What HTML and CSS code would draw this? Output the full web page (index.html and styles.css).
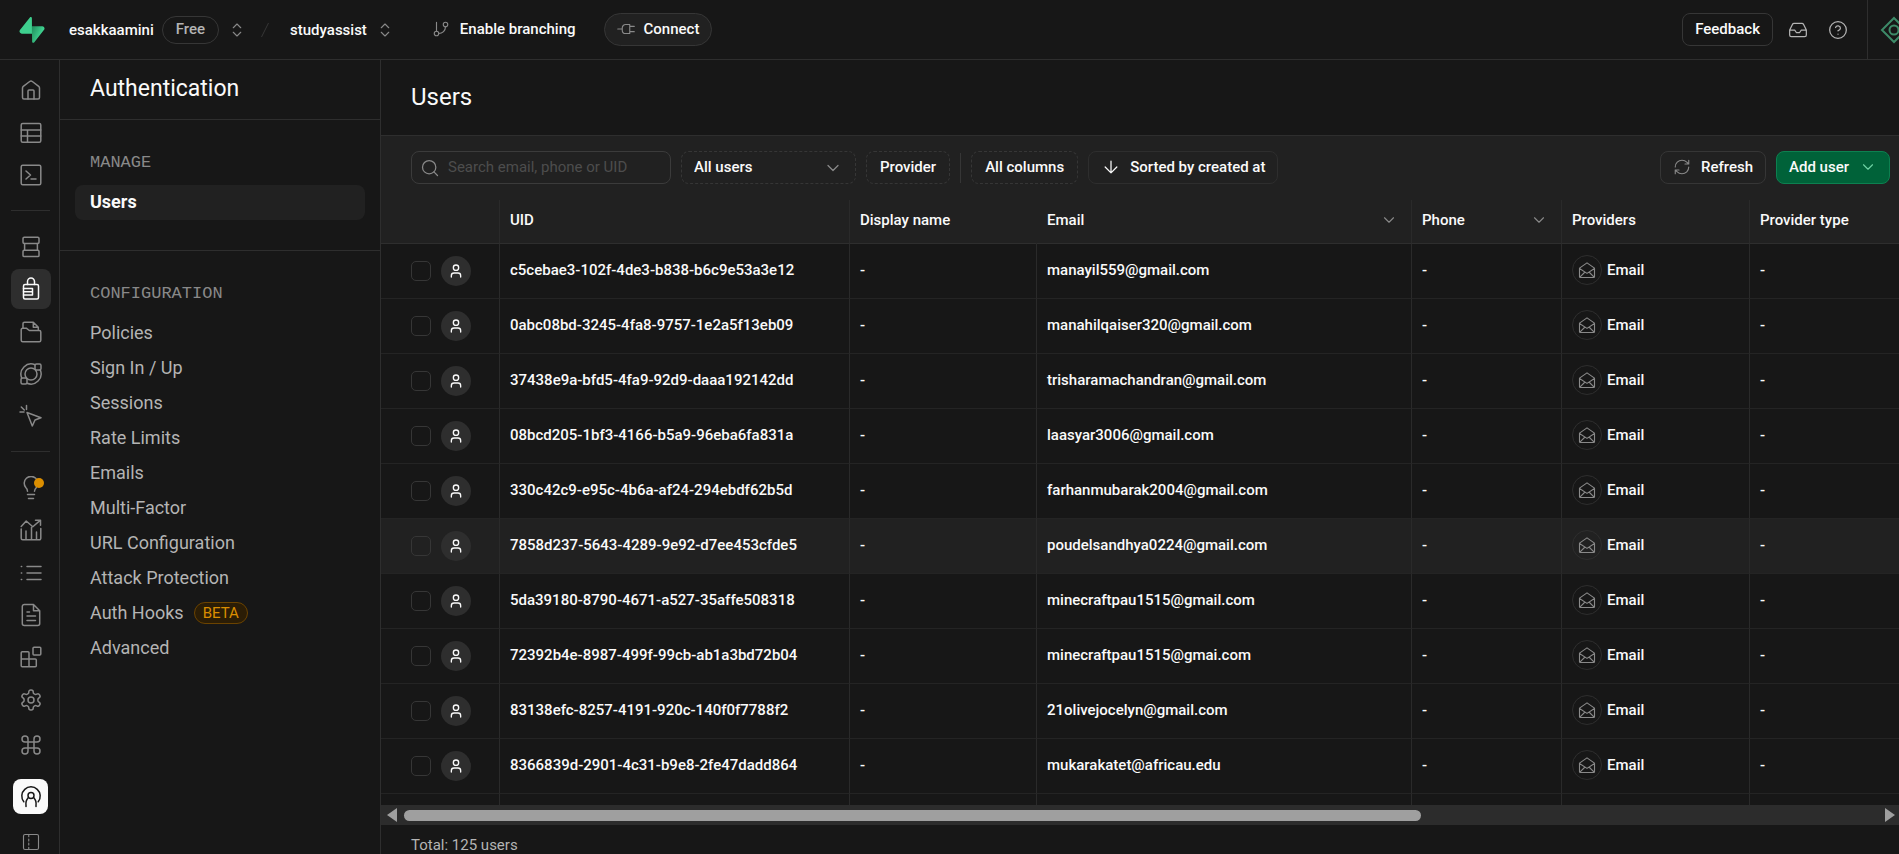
FILE: index.html
```
<!DOCTYPE html>
<html lang="en">
<head>
    <meta charset="UTF-8">
    <meta name="viewport" content="width=device-width, initial-scale=1.0">
    <title>Users | Authentication</title>
    <link rel="stylesheet" href="styles.css">
</head>
<body>

<!-- Icon set -->
<svg class="sprite" aria-hidden="true">
    <symbol id="i-home" viewBox="0 0 24 24"><path d="M3.5 10a2 2 0 0 1 .8-1.6l6.4-4.9a2.2 2.2 0 0 1 2.6 0l6.4 4.9a2 2 0 0 1 .8 1.6v9.5a1.5 1.5 0 0 1-1.5 1.5H5a1.5 1.5 0 0 1-1.5-1.5z"/><path d="M9 21v-8a1 1 0 0 1 1-1h4a1 1 0 0 1 1 1v8"/></symbol>
    <symbol id="i-table" viewBox="0 0 24 24"><rect x="2.2" y="2.5" width="19.6" height="18.8" rx="1.5"/><path d="M2.2 9h19.6M2.2 15h19.6M8.5 9v12.3"/></symbol>
    <symbol id="i-sql" viewBox="0 0 24 24"><rect x="2.2" y="2.2" width="19.6" height="19.6" rx="1.5"/><path d="m7 8 4.5 4L7 16M12 16h5"/></symbol>
    <symbol id="i-database" viewBox="0 0 24 24"><rect x="4" y="2.2" width="16" height="6.3" rx="1.2"/><rect x="4" y="15.3" width="16" height="6.3" rx="1.2"/><path d="M5.6 8.5v6.8M18.4 8.5v6.8"/></symbol>
    <symbol id="i-auth" viewBox="0 0 24 24"><path d="M4.500 9A1.500 1.500 0 0 1 6 7.500h12A1.500 1.500 0 0 1 19.500 9v11.500A1.500 1.500 0 0 1 18 22H6a1.500 1.500 0 0 1-1.500-1.500z"/><path d="M8.500 7.500V4.500a3.500 3.500 0 0 1 7 0v3M4.500 11.500h9v6.500h-9M4.500 14.700h9"/></symbol>
    <symbol id="i-storage" viewBox="0 0 24 24"><path d="M4 8V3.700A1.500 1.500 0 0 1 5.500 2.200h8.800l5 5V9.500M14.300 2.200v5h5"/><path d="M2.200 10A1.600 1.600 0 0 1 3.800 8.200h3.500l3 2.300h10a1.500 1.500 0 0 1 1.500 1.500v8.300a1.500 1.500 0 0 1-1.500 1.500H3.700a1.500 1.500 0 0 1-1.500-1.500z"/></symbol>
    <symbol id="i-functions" viewBox="0 0 24 24"><circle cx="12" cy="12" r="6"/><rect x="2" y="16" width="6" height="6" rx="1.500"/><rect x="16" y="2" width="6" height="6" rx="1.500"/><path d="M2.700 16A10.200 10.200 0 0 1 16 2.700M21.300 8A10.200 10.200 0 0 1 8 21.300"/></symbol>
    <symbol id="i-realtime" viewBox="0 0 24 24"><path d="m8 8.500 14 5.200-6 2.300-2.700 6zM7.500 1.500v4M1 8h4M2.300 3l3 3"/></symbol>
    <symbol id="i-bulb" viewBox="0 0 24 24"><path d="M8.500 15.200c0-1.800-.7-2.700-1.700-3.700a6.800 6.800 0 1 1 10.500 0c-1 1.100-1.800 1.900-1.800 3.700M8.500 18.500h7M9.500 22.500h5"/></symbol>
    <symbol id="i-reports" viewBox="0 0 24 24"><path d="M2.200 11v9.300a1.500 1.500 0 0 0 1.500 1.500h16.600a1.500 1.500 0 0 0 1.500-1.500V10.500M7 21.800V13M12.500 21.800V9.500M17.500 21.800V14M2.200 8.500l5-5.500 6.600 5.700 7.400-6.300M16.500 2.200h5v5"/></symbol>
    <symbol id="i-list" viewBox="0 0 24 24"><path d="M8 5.500h14M8 12h14M8 18.500h14M2.300 5.500h.4M2.300 12h.4M2.300 18.500h.4"/></symbol>
    <symbol id="i-docs" viewBox="0 0 24 24"><path d="M14.500 1.500H5.300a2 2 0 0 0-2 2v17a2 2 0 0 0 2 2h13.400a2 2 0 0 0 2-2V7.700zM14.500 1.500v6.200h6.200M8 9h2.500M8 13h8.500M8 17.500h8.500"/></symbol>
    <symbol id="i-blocks" viewBox="0 0 24 24"><rect x="14" y="2.200" width="7.800" height="7.800" rx="1"/><path d="M10 21.800V7.700a1 1 0 0 0-1-1H3.200a1 1 0 0 0-1 1v13.100a1 1 0 0 0 1 1h13.100a1 1 0 0 0 1-1V15a1 1 0 0 0-1-1H2.200"/></symbol>
    <symbol id="i-settings" viewBox="0 0 24 24"><path d="M12.220 2h-.44a2 2 0 0 0-2 2v.18a2 2 0 0 1-1 1.730l-.43.25a2 2 0 0 1-2 0l-.15-.08a2 2 0 0 0-2.730.73l-.22.38a2 2 0 0 0 .73 2.730l.15.1a2 2 0 0 1 1 1.720v.51a2 2 0 0 1-1 1.740l-.15.09a2 2 0 0 0-.73 2.730l.22.38a2 2 0 0 0 2.730.73l.15-.08a2 2 0 0 1 2 0l.43.25a2 2 0 0 1 1 1.730V20a2 2 0 0 0 2 2h.44a2 2 0 0 0 2-2v-.18a2 2 0 0 1 1-1.730l.43-.25a2 2 0 0 1 2 0l.15.08a2 2 0 0 0 2.730-.73l.22-.39a2 2 0 0 0-.73-2.730l-.15-.08a2 2 0 0 1-1-1.740v-.5a2 2 0 0 1 1-1.740l.15-.09a2 2 0 0 0 .73-2.730l-.22-.38a2 2 0 0 0-2.730-.73l-.15.08a2 2 0 0 1-2 0l-.43-.25a2 2 0 0 1-1-1.730V4a2 2 0 0 0-2-2z"/><circle cx="12" cy="12" r="3"/></symbol>
    <symbol id="i-command" viewBox="0 0 24 24"><path d="M15 6v12a3 3 0 1 0 3-3H6a3 3 0 1 0 3 3V6a3 3 0 1 0-3 3h12a3 3 0 1 0-3-3"/></symbol>
    <symbol id="i-profile" viewBox="0 0 24 24"><circle cx="12" cy="10.500" r="3"/><path d="M7 20.500c-.4-3-.2-5.200 2-7.600M17 20.500c.4-3 .2-5.200-2-7.600M4.800 16.800a9.200 9.200 0 1 1 14.400 0M7 20.500v1M17 20.500v1"/></symbol>
    <symbol id="i-panel" viewBox="0 0 24 24"><rect x="2" y="2" width="20" height="20" rx="2"/><path d="M9 3v2M9 8v2.500M9 13.500V16M9 19v2"/></symbol>
    <symbol id="i-updown" viewBox="0 0 24 24"><path d="m7 15 5 5 5-5M7 9l5-5 5 5"/></symbol>
    <symbol id="i-branch" viewBox="0 0 24 24"><path d="M6 3v12M18 9a9 9 0 0 1-9 9"/><circle cx="18" cy="6" r="3"/><circle cx="6" cy="18" r="3"/></symbol>
    <symbol id="i-plug" viewBox="0 0 24 24"><path d="M1 12h6M17 8.500h6M17 15.500h6M17 6v12h-5.500A4.500 4.500 0 0 1 7 13.500v-3A4.500 4.500 0 0 1 11.500 6z"/></symbol>
    <symbol id="i-inbox" viewBox="0 0 24 24"><path d="M22 12h-6l-2 3h-4l-2-3H2M5.450 5.110 2 12v6a2 2 0 0 0 2 2h16a2 2 0 0 0 2-2v-6l-3.450-6.890A2 2 0 0 0 16.760 4H7.240a2 2 0 0 0-1.790 1.110z"/></symbol>
    <symbol id="i-help" viewBox="0 0 24 24"><circle cx="12" cy="12" r="10"/><path d="M9.090 9a3 3 0 0 1 5.830 1c0 2-3 3-3 3M12 17h.01"/></symbol>
    <symbol id="i-search" viewBox="0 0 24 24"><circle cx="11" cy="11" r="8"/><path d="m21 21-4.300-4.300"/></symbol>
    <symbol id="i-down" viewBox="0 0 24 24"><path d="m6 9 6 6 6-6"/></symbol>
    <symbol id="i-arrow" viewBox="0 0 24 24"><path d="M12 5v14M19 12l-7 7-7-7"/></symbol>
    <symbol id="i-refresh" viewBox="0 0 24 24"><path d="M3 12a9 9 0 0 1 9-9 9.750 9.750 0 0 1 6.740 2.740L21 8M21 3v5h-5M21 12a9 9 0 0 1-9 9 9.750 9.750 0 0 1-6.740-2.740L3 16M8 16H3v5"/></symbol>
    <symbol id="i-user" viewBox="0 0 24 24"><circle cx="12" cy="7" r="4"/><path d="M19 21v-2a4 4 0 0 0-4-4H9a4 4 0 0 0-4 4v2"/></symbol>
    <symbol id="i-mail" viewBox="0 0 24 24"><path d="M2 9.500 12 2.500l10 7V21a1 1 0 0 1-1 1H3a1 1 0 0 1-1-1zM2 10l10 6.500L22 10M2.500 21.500 9 15M21.500 21.500 15 15"/></symbol>
</svg>

<header class="topbar">
    <a class="logo" href="#" aria-label="Home">
        <svg width="26" height="26" viewBox="0 0 109 113">
            <defs>
                <linearGradient id="bolt" x1="54" y1="55" x2="94" y2="72" gradientUnits="userSpaceOnUse">
                    <stop stop-color="#249361"/>
                    <stop offset="1" stop-color="#3ecf8e"/>
                </linearGradient>
            </defs>
            <path fill="url(#bolt)" d="M63.700 110.300C60.850 113.900 55.050 111.900 54.980 107.300L53.970 40.060H99.200c8.190 0 12.760 9.460 7.660 15.880z"/>
            <path fill="#3ecf8e" d="M45.320 2.070C48.180-1.530 53.970.44 54.040 5.040l.44 67.250H9.830c-8.190 0-12.760-9.460-7.660-15.870z"/>
        </svg>
    </a>
    <a class="crumb" href="#">esakkaamini</a>
    <span class="plan">Free</span>
    <button class="icon-btn switch" aria-label="Switch organization"><svg class="icon s18"><use href="#i-updown"/></svg></button>
    <svg class="slash" viewBox="0 0 20 20" aria-hidden="true"><path d="M6.500 17 13.500 3"/></svg>
    <a class="crumb" href="#">studyassist</a>
    <button class="icon-btn switch" aria-label="Switch project"><svg class="icon s18"><use href="#i-updown"/></svg></button>
    <button class="btn branching"><svg class="icon s18"><use href="#i-branch"/></svg>Enable branching</button>
    <button class="btn connect"><svg class="icon s18"><use href="#i-plug"/></svg>Connect</button>
    <div class="topbar-right">
        <button class="btn feedback">Feedback</button>
        <button class="icon-btn tool" aria-label="Inbox"><svg class="icon s20"><use href="#i-inbox"/></svg></button>
        <button class="icon-btn tool" aria-label="Help"><svg class="icon s20"><use href="#i-help"/></svg></button>
        <button class="icon-btn assistant" aria-label="Assistant">
            <svg width="28" height="28" viewBox="0 0 28 28"><path d="M14 2 26 14 14 26 2 14z"/><circle cx="14" cy="14" r="4.500"/></svg>
        </button>
    </div>
</header>

<div class="layout">
    <nav class="rail" aria-label="Project">
        <div class="rail-group three">
            <a href="#" aria-label="Home"><svg class="icon"><use href="#i-home"/></svg></a>
            <a href="#" aria-label="Table editor"><svg class="icon"><use href="#i-table"/></svg></a>
            <a href="#" aria-label="SQL editor"><svg class="icon"><use href="#i-sql"/></svg></a>
        </div>
        <hr>
        <div class="rail-group five">
            <a href="#" aria-label="Database"><svg class="icon"><use href="#i-database"/></svg></a>
            <a href="#" class="active" aria-label="Authentication"><svg class="icon"><use href="#i-auth"/></svg></a>
            <a href="#" aria-label="Storage"><svg class="icon"><use href="#i-storage"/></svg></a>
            <a href="#" aria-label="Edge functions"><svg class="icon"><use href="#i-functions"/></svg></a>
            <a href="#" aria-label="Realtime"><svg class="icon"><use href="#i-realtime"/></svg></a>
        </div>
        <hr>
        <div class="rail-group five">
            <a href="#" class="notify" aria-label="Advisors"><svg class="icon"><use href="#i-bulb"/></svg></a>
            <a href="#" aria-label="Reports"><svg class="icon"><use href="#i-reports"/></svg></a>
            <a href="#" aria-label="Logs"><svg class="icon"><use href="#i-list"/></svg></a>
            <a href="#" aria-label="API docs"><svg class="icon"><use href="#i-docs"/></svg></a>
            <a href="#" aria-label="Integrations"><svg class="icon"><use href="#i-blocks"/></svg></a>
        </div>
        <div class="rail-bottom">
            <a href="#" aria-label="Settings"><svg class="icon"><use href="#i-settings"/></svg></a>
            <button class="icon-btn" aria-label="Command menu"><svg class="icon"><use href="#i-command"/></svg></button>
            <button class="icon-btn profile" aria-label="Account"><svg class="icon"><use href="#i-profile"/></svg></button>
            <button class="icon-btn toggle" aria-label="Toggle sidebar"><svg class="icon s18"><use href="#i-panel"/></svg></button>
        </div>
    </nav>

    <aside class="menu">
        <h2 class="menu-title">Authentication</h2>
        <section class="menu-section">
            <h3>MANAGE</h3>
            <a href="#" class="current">Users</a>
        </section>
        <section class="menu-section">
            <h3>CONFIGURATION</h3>
            <a href="#">Policies</a>
            <a href="#">Sign In / Up</a>
            <a href="#">Sessions</a>
            <a href="#">Rate Limits</a>
            <a href="#">Emails</a>
            <a href="#">Multi-Factor</a>
            <a href="#">URL Configuration</a>
            <a href="#">Attack Protection</a>
            <a href="#">Auth Hooks <span class="beta">BETA</span></a>
            <a href="#">Advanced</a>
        </section>
    </aside>

    <main class="content">
        <h1 class="page-title">Users</h1>

        <div class="toolbar">
            <label class="search">
                <svg class="icon s20"><use href="#i-search"/></svg>
                <input type="text" placeholder="Search email, phone or UID" aria-label="Search users">
            </label>
            <div class="select">
                <select aria-label="Filter users">
                    <option>All users</option>
                    <option>Verified users</option>
                    <option>Unverified users</option>
                </select>
                <svg class="icon s20"><use href="#i-down"/></svg>
            </div>
            <button class="btn dashed">Provider</button>
            <span class="separator"></span>
            <button class="btn dashed">All columns</button>
            <button class="btn sort"><svg class="icon s20"><use href="#i-arrow"/></svg>Sorted by created at</button>
            <div class="toolbar-right">
                <button class="btn refresh"><svg class="icon s18"><use href="#i-refresh"/></svg>Refresh</button>
                <button class="btn primary">Add user<svg class="icon s18"><use href="#i-down"/></svg></button>
            </div>
        </div>

        <div class="table-wrap">
            <table>
                <colgroup>
                    <col class="col-select">
                    <col class="col-uid">
                    <col class="col-name">
                    <col class="col-email">
                    <col class="col-phone">
                    <col class="col-providers">
                    <col class="col-type">
                </colgroup>
                <thead>
                    <tr>
                        <th></th>
                        <th>UID</th>
                        <th class="no-line">Display name</th>
                        <th><div class="th-menu">Email<svg class="icon s18"><use href="#i-down"/></svg></div></th>
                        <th><div class="th-menu">Phone<svg class="icon s18"><use href="#i-down"/></svg></div></th>
                        <th>Providers</th>
                        <th>Provider type</th>
                    </tr>
                </thead>
                <tbody id="users"></tbody>
            </table>
        </div>

        <div class="scrollbar">
            <button class="arrow left" aria-label="Scroll left"></button>
            <div class="track"><div class="thumb"></div></div>
            <button class="arrow right" aria-label="Scroll right"></button>
        </div>

        <footer class="total">Total: 125 users</footer>
    </main>
</div>

<script>
    const users = [
        ['c5cebae3-102f-4de3-b838-b6c9e53a3e12', 'manayil559@gmail.com'],
        ['0abc08bd-3245-4fa8-9757-1e2a5f13eb09', 'manahilqaiser320@gmail.com'],
        ['37438e9a-bfd5-4fa9-92d9-daaa192142dd', 'trisharamachandran@gmail.com'],
        ['08bcd205-1bf3-4166-b5a9-96eba6fa831a', 'laasyar3006@gmail.com'],
        ['330c42c9-e95c-4b6a-af24-294ebdf62b5d', 'farhanmubarak2004@gmail.com'],
        ['7858d237-5643-4289-9e92-d7ee453cfde5', 'poudelsandhya0224@gmail.com'],
        ['5da39180-8790-4671-a527-35affe508318', 'minecraftpau1515@gmail.com'],
        ['72392b4e-8987-499f-99cb-ab1a3bd72b04', 'minecraftpau1515@gmai.com'],
        ['83138efc-8257-4191-920c-140f0f7788f2', '21olivejocelyn@gmail.com'],
        ['8366839d-2901-4c31-b9e8-2fe47dadd864', 'mukarakatet@africau.edu']
    ];
    const highlighted = 5;

    // Build one table row per user
    const rows = users.map(([uid, email], i) => `
        <tr class="${i === highlighted ? 'highlighted' : ''}">
            <td>
                <div class="pick">
                    <input type="checkbox" aria-label="Select ${email}">
                    <span class="avatar"><svg class="icon s16"><use href="#i-user"/></svg></span>
                </div>
            </td>
            <td>${uid}</td>
            <td>-</td>
            <td>${email}</td>
            <td>-</td>
            <td>
                <div class="provider">
                    <span class="provider-icon"><svg class="icon s18"><use href="#i-mail"/></svg></span>
                    Email
                </div>
            </td>
            <td>-</td>
        </tr>`);

    // Empty row under the last one
    rows.push('<tr>' + '<td></td>'.repeat(7) + '</tr>');

    document.getElementById('users').innerHTML = rows.join('');
</script>

</body>
</html>
```

FILE: styles.css
```
* {
    box-sizing: border-box;
}

body {
    margin: 0;
    height: 100vh;
    display: flex;
    flex-direction: column;
    overflow: hidden;
    background-color: #171717;
    color: #fafafa;
    font-family: Roboto, "Liberation Sans", sans-serif;
    font-size: 15px;
    font-weight: 500;
}

a {
    color: inherit;
    text-decoration: none;
}

button,
input,
select {
    font: inherit;
    color: inherit;
}

h1, h2, h3 {
    margin: 0;
    font-weight: 400;
}

.sprite {
    display: none;
}

.icon {
    width: 24px;
    height: 24px;
    flex: none;
    fill: none;
    stroke: #898989;
    stroke-width: 1.5;
    stroke-linecap: round;
    stroke-linejoin: round;
}

.s16 {
    width: 16px;
    height: 16px;
}

.s18 {
    width: 18px;
    height: 18px;
}

.s20 {
    width: 20px;
    height: 20px;
}

.btn {
    display: flex;
    align-items: center;
    height: 33px;
    padding: 0 12px 2px;
    border: 1px solid #363636;
    border-radius: 8px;
    background-color: #212121;
    white-space: nowrap;
    cursor: pointer;
}

.icon-btn {
    display: flex;
    align-items: center;
    justify-content: center;
    padding: 0;
    border: 0;
    background: none;
    cursor: pointer;
}

/* Top bar */
.topbar {
    display: flex;
    align-items: center;
    flex: none;
    height: 60px;
    padding-left: 19px;
    border-bottom: 1px solid #2e2e2e;
}

.logo {
    display: flex;
    margin-right: 24px;
}

.plan {
    margin-left: 8px;
    padding: 3px 13px 5px;
    border: 1px solid #363636;
    border-radius: 14px;
    color: #b4b4b4;
    line-height: 18px;
}

.switch {
    width: 36px;
    height: 32px;
}

.slash {
    width: 20px;
    height: 20px;
    margin-right: 15px;
    fill: none;
    stroke: #363636;
}

.branching {
    margin-left: 17px;
    border: 0;
    background: none;
    gap: 10px;
}

.connect {
    margin-left: 16px;
    gap: 9px;
    border-radius: 17px;
}

.topbar-right {
    display: flex;
    align-items: center;
    align-self: stretch;
    margin-left: auto;
}

.feedback {
    margin-right: 5px;
    background-color: #171717;
}

.tool {
    width: 40px;
    height: 40px;
}

.tool .icon {
    stroke: #b4b4b4;
}

.assistant {
    align-self: stretch;
    width: 32px;
    margin-left: 9px;
    padding-left: 12px;
    justify-content: flex-start;
    border-left: 1px solid #2e2e2e;
    overflow: hidden;
}

.assistant svg {
    flex: none;
    fill: none;
    stroke: #3d8a68;
    stroke-width: 2;
}

/* Page columns */
.layout {
    display: flex;
    flex: 1;
    min-height: 0;
}

.rail {
    display: flex;
    flex-direction: column;
    align-items: center;
    flex: none;
    width: 60px;
    padding: 10px 0 0 2px;
    border-right: 1px solid #2e2e2e;
    overflow: hidden;
}

.rail-group {
    display: flex;
    flex-direction: column;
    flex: none;
    justify-content: space-between;
}

.three {
    height: 125px;
}

.five {
    height: 209px;
}

.rail hr {
    width: 39px;
    margin: 15px 0 16px;
    border: 0;
    border-top: 1px solid #2e2e2e;
}

.rail a {
    display: flex;
    align-items: center;
    justify-content: center;
    width: 40px;
    height: 40px;
    border-radius: 8px;
}

.rail .active {
    background-color: #2e2e2e;
}

.active .icon {
    stroke: #fafafa;
}

.notify {
    position: relative;
}

.notify::after {
    content: "";
    position: absolute;
    top: 10px;
    right: 7px;
    width: 10px;
    height: 10px;
    border-radius: 50%;
    background-color: #db8e00;
}

.rail-bottom {
    display: flex;
    flex-direction: column;
    flex: none;
    align-items: center;
    padding-top: 3px;
}

.rail-bottom .icon-btn {
    width: 40px;
    height: 50px;
}

.rail-bottom .profile {
    width: 35px;
    height: 35px;
    margin-top: 9px;
    border-radius: 8px;
    background-color: #fafafa;
}

.profile .icon {
    stroke: #171717;
}

.rail-bottom .toggle {
    height: 55px;
}

/* Section menu */
.menu {
    flex: none;
    width: 321px;
    border-right: 1px solid #2e2e2e;
}

.menu-title {
    height: 60px;
    padding-left: 30px;
    border-bottom: 1px solid #2e2e2e;
    font-size: 23px;
    line-height: 58px;
}

.menu-section {
    padding: 30px 15px;
}

.menu-section + .menu-section {
    border-top: 1px solid #2e2e2e;
}

.menu-section h3 {
    margin-bottom: 10px;
    padding-left: 15px;
    color: #898989;
    font-family: "Liberation Mono", monospace;
    font-size: 17px;
    line-height: 25px;
}

.menu-section a {
    display: flex;
    align-items: center;
    height: 35px;
    padding: 0 15px 2px;
    border-radius: 8px;
    color: #b4b4b4;
    font-size: 18px;
    font-weight: 400;
}

.menu-section .current {
    background-color: #212121;
    color: #fafafa;
    font-weight: 700;
}

.beta {
    margin-left: 10px;
    padding: 0 8px;
    border: 1px solid #6b4300;
    border-radius: 11px;
    background-color: #2b1d06;
    color: #db8e00;
    font-size: 15px;
    line-height: 20px;
}

/* Users page */
.content {
    display: flex;
    flex-direction: column;
    flex: 1;
    min-width: 0;
}

.page-title {
    flex: none;
    height: 76px;
    padding-left: 30px;
    border-bottom: 1px solid #2e2e2e;
    font-size: 24px;
    line-height: 74px;
}

.toolbar {
    display: flex;
    align-items: center;
    flex: none;
    gap: 10px;
    height: 64px;
    padding: 0 9px 1px 30px;
    background-color: #212121;
}

.search {
    display: flex;
    align-items: center;
    width: 260px;
    height: 33px;
    padding: 0 8px;
    gap: 8px;
    border: 1px solid #3b3b3b;
    border-radius: 8px;
}

.search input {
    flex: 1;
    min-width: 0;
    padding: 0 0 2px;
    border: 0;
    outline: 0;
    background: none;
    font-weight: 400;
}

.search input::placeholder {
    color: #4d4d4d;
}

.select {
    display: grid;
    align-items: center;
    width: 175px;
}

.select > * {
    grid-area: 1 / 1;
}

.select select {
    appearance: none;
    width: 100%;
    height: 33px;
    padding: 0 12px 2px;
    border: 1px dashed #363636;
    border-radius: 8px;
    background: none;
}

.select .icon {
    justify-self: end;
    margin-right: 13px;
    pointer-events: none;
}

.dashed {
    padding: 0 13px 2px;
    border-style: dashed;
}

.separator {
    width: 1px;
    height: 30px;
    background-color: #363636;
}

.sort {
    gap: 9px;
    border-color: #2e2e2e;
}

.sort .icon {
    stroke: #fafafa;
}

.toolbar-right {
    display: flex;
    gap: 10px;
    margin-left: auto;
}

.refresh {
    gap: 10px;
}

.primary {
    gap: 10px;
    border-color: #0d8050;
    background-color: #006239;
}

.primary .icon {
    stroke: #6fd3a5;
}

/* Table */
.table-wrap {
    flex: 1;
    min-height: 0;
    overflow: hidden;
}

table {
    width: 1556px;
    table-layout: fixed;
    border-collapse: separate;
    border-spacing: 0;
}

.col-select {
    width: 119px;
}

.col-uid {
    width: 350px;
}

.col-name,
.col-type {
    width: 187px;
}

.col-providers {
    width: 188px;
}

.col-email {
    width: 375px;
}

.col-phone {
    width: 150px;
}

th,
td {
    padding: 0 10px 2px;
    border-right: 1px solid #2a2a2a;
    border-bottom: 1px solid #242424;
    text-align: left;
    white-space: nowrap;
}

th {
    height: 44px;
    padding-bottom: 4px;
    border-bottom-color: #2e2e2e;
    background-color: #212121;
    font-weight: 500;
}

.no-line {
    border-right-color: #212121;
}

td {
    height: 55px;
}

td:first-child {
    padding: 0 0 0 30px;
}

.highlighted td {
    background-color: #212121;
}

.th-menu {
    display: flex;
    align-items: center;
    justify-content: space-between;
    padding-right: 3px;
}

.pick {
    display: flex;
    align-items: center;
    gap: 10px;
}

.pick input {
    appearance: none;
    width: 20px;
    height: 20px;
    margin: 0;
    border: 1px solid #363636;
    border-radius: 5px;
}

.avatar,
.provider-icon {
    display: flex;
    align-items: center;
    justify-content: center;
    width: 30px;
    height: 30px;
    border-radius: 50%;
}

.avatar {
    background-color: #2e2e2e;
}

.avatar .icon {
    stroke: #fafafa;
    stroke-width: 2;
}

.provider {
    display: flex;
    align-items: center;
    gap: 5px;
}

.provider-icon {
    border: 1px solid #2e2e2e;
}

/* Horizontal scrollbar */
.scrollbar {
    display: flex;
    align-items: center;
    flex: none;
    height: 20px;
    padding: 0 4px 0 6px;
    background-color: #2c2c2c;
}

.arrow {
    width: 10px;
    height: 14px;
    padding: 0;
    border: 0;
    background-color: #9f9f9f;
}

.left {
    clip-path: polygon(100% 0, 100% 100%, 0 50%);
}

.right {
    clip-path: polygon(0 0, 100% 50%, 0 100%);
}

.track {
    flex: 1;
    margin: 0 7px;
}

.thumb {
    width: 69%;
    height: 11px;
    border-radius: 6px;
    background-color: #9f9f9f;
}

.total {
    flex: none;
    height: 29px;
    padding: 10px 30px 0;
    color: #b4b4b4;
    font-weight: 400;
    line-height: 20px;
}
```
